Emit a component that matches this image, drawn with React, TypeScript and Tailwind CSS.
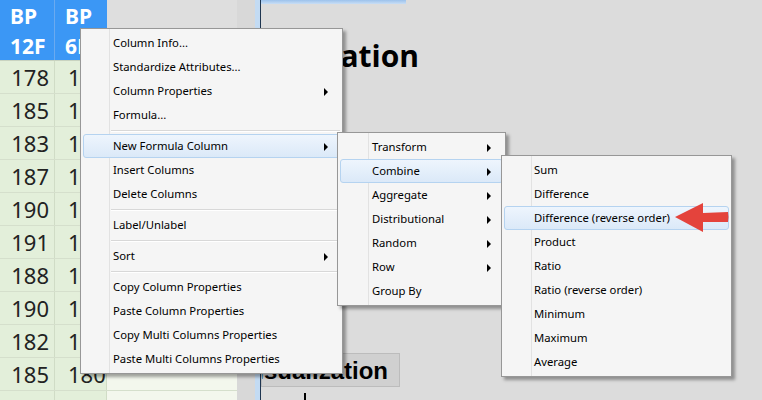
import React from "react";

type Item = { label?: string; sub?: boolean; active?: boolean; sep?: boolean };

const MAIN: Item[] = [
  { label: "Column Info..." },
  { label: "Standardize Attributes..." },
  { label: "Column Properties", sub: true },
  { label: "Formula..." },
  { sep: true },
  { label: "New Formula Column", sub: true, active: true },
  { label: "Insert Columns" },
  { label: "Delete Columns" },
  { sep: true },
  { label: "Label/Unlabel" },
  { sep: true },
  { label: "Sort", sub: true },
  { sep: true },
  { label: "Copy Column Properties" },
  { label: "Paste Column Properties" },
  { label: "Copy Multi Columns Properties" },
  { label: "Paste Multi Columns Properties" },
];

const FORMULA: Item[] = [
  { label: "Transform", sub: true },
  { label: "Combine", sub: true, active: true },
  { label: "Aggregate", sub: true },
  { label: "Distributional", sub: true },
  { label: "Random", sub: true },
  { label: "Row", sub: true },
  { label: "Group By" },
];

const COMBINE: Item[] = [
  { label: "Sum" },
  { label: "Difference" },
  { label: "Difference (reverse order)", active: true },
  { label: "Product" },
  { label: "Ratio" },
  { label: "Ratio (reverse order)" },
  { label: "Minimum" },
  { label: "Maximum" },
  { label: "Average" },
];

const COL1 = [178, 185, 183, 187, 190, 191, 188, 190, 182, 185];
const COL2 = [172, 181, 179, 180, 184, 186, 183, 185, 177, 180];

function Menu({ items, className, gutter, sepPad, textPad }: { items: Item[]; className: string; gutter: string; sepPad: string; textPad: string }) {
  return (
    <div
      className={`absolute border border-[#979797] bg-[#f5f5f5] p-[2px] shadow-[3px_3px_3px_rgba(0,0,0,0.35)] font-['Noto_Sans',sans-serif] text-[11.3px] text-black ${className}`}
    >
      <div className={`absolute top-0 bottom-0 w-[2px] border-l border-[#e2e2e2] border-r-white ${gutter}`} />
      {items.map((it, i) =>
        it.sep ? (
          <div key={i} className="h-[7px] flex items-center">
            <div className={`w-full h-[2px] border-t border-[#d8d8d8] bg-white ${sepPad}`} />
          </div>
        ) : (
          <div
            key={i}
            className={`relative h-6 flex items-center pb-[1px] ${textPad} ${
              it.active
                ? "rounded-[3px] border border-[#b5d3f0] bg-linear-to-b from-[#eef5fd] to-[#dbe9f8]"
                : "border border-transparent"
            }`}
          >
            <span className="leading-none">{it.label}</span>
            {it.sub && (
              <span className="absolute right-[11px] top-[8px] w-0 h-0 border-y-[4px] border-y-transparent border-l-[4px] border-l-black" />
            )}
          </div>
        )
      )}
    </div>
  );
}

export default function App() {
  return (
    <div className="relative w-[762px] h-[400px] overflow-hidden bg-[#dcdcdc] flex">
      {/* Data grid */}
      <div className="w-[237px] shrink-0 flex flex-col font-['Noto_Sans',sans-serif]">
        <div className="flex h-[61px] shrink-0 border-b border-[#c9d3c0]">
          <div className="w-[55px] bg-[#3b97f5] border-r border-[#6aaaf0] text-white font-bold text-[21px] leading-[30px] pl-[10px] pt-[1px]">
            <div>BP</div>
            <div>12F</div>
          </div>
          <div className="w-[52px] bg-[#3b97f5] text-white font-bold text-[21px] leading-[30px] pl-[10px] pt-[1px]">
            <div>BP</div>
            <div>6M</div>
          </div>
          <div className="flex-1 bg-[#dedede]" />
        </div>
        {COL1.map((v, i) => (
          <div key={i} className="flex h-[33px] shrink-0 border-b border-[#d5dfcc]">
            <div className="w-[55px] bg-[#e3efda] border-r border-[#d0dcc6] text-[22px] text-[#222] text-right pr-[5px] leading-[32px]">
              {v}
            </div>
            <div className="w-[52px] bg-[#e3efda] border-r border-[#d0dcc6] text-[22px] text-[#222] pl-[13px] leading-[32px]">
              {COL2[i]}
            </div>
            <div className="flex-1 bg-[#f3f7ed]" />
          </div>
        ))}
        <div className="flex flex-1">
          <div className="w-[55px] bg-[#e3efda] border-r border-[#d0dcc6]" />
          <div className="w-[52px] bg-[#e3efda] border-r border-[#d0dcc6]" />
          <div className="flex-1 bg-[#f3f7ed]" />
        </div>
      </div>

      {/* Splitter */}
      <div className="w-[18px] shrink-0 bg-[#d8d8d8]" />
      <div className="w-[5px] shrink-0 bg-[#c3dbf3]" />
      <div className="w-[1px] shrink-0 bg-[#1e3550]" />

      {/* Right panel */}
      <div className="flex-1 relative overflow-hidden flex flex-col">
        <div className="h-[4px] w-[145px] bg-linear-to-b from-[#9cc2ec] to-[#c9def5]" />
        <div className="h-[70px] relative">
          <div className="absolute right-[343px] top-[37px] whitespace-nowrap font-['Open_Sans',sans-serif] font-bold text-[30px] leading-none text-black">
            Visualization
          </div>
        </div>
        <div className="flex-1" />
        <div className="h-[47px] relative">
          <div className="absolute left-0 top-0 w-[139px] h-[34px] bg-[#d0d0d0] border border-[#bcbcbc] overflow-hidden">
            <div className="absolute right-[11px] top-[5px] whitespace-nowrap font-['Liberation_Sans',sans-serif] font-bold text-[24px] leading-none text-black">
              Visualization
            </div>
          </div>
          <div className="absolute left-[43px] top-[40px] w-[2px] h-[7px] bg-black" />
        </div>
      </div>

      {/* Context menus */}
      <Menu items={MAIN} className="left-[80px] top-[28px] w-[263px] z-10" gutter="left-[28px]" sepPad="ml-[28px]" textPad="pl-[29px]" />
      <Menu items={FORMULA} className="left-[337px] top-[132px] w-[169px] z-20" gutter="left-[30px]" sepPad="ml-[30px]" textPad="pl-[31px]" />
      <Menu items={COMBINE} className="left-[501px] top-[155px] w-[231px] z-30" gutter="left-[29px]" sepPad="ml-[29px]" textPad="pl-[29px]" />

      {/* Red arrow */}
      <svg className="absolute left-[672px] top-[200px] z-40" width="60" height="34" viewBox="0 0 60 34">
        <path d="M3 17 L31 3 L31 13 L56 12 Q57 17 56 22 L31 22 L31 32 Z" fill="#e4433c" />
      </svg>
    </div>
  );
}
